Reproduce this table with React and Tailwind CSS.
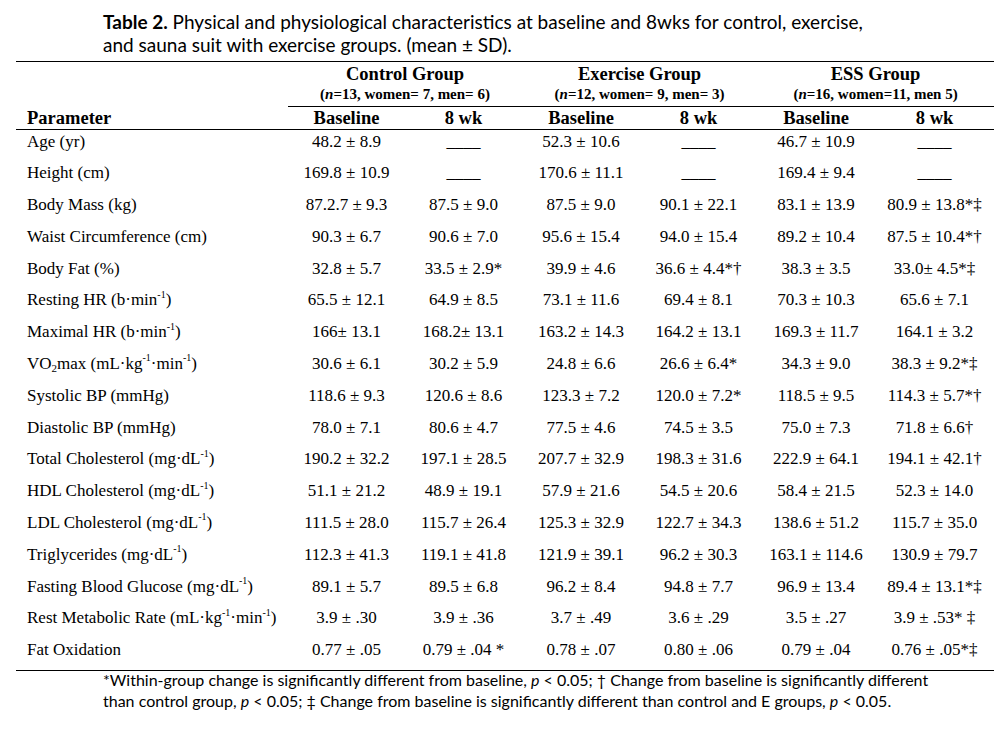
import React from "react";

const S = ({ children }) => (
  <sup className="text-[10px] relative -top-[1px] leading-none align-super">{children}</sup>
);

const rows = [
  ["Age (yr)", "48.2 ± 8.9", "____", "52.3 ± 10.6", "____", "46.7 ± 10.9", "____"],
  ["Height (cm)", "169.8 ± 10.9", "____", "170.6 ± 11.1", "____", "169.4 ± 9.4", "____"],
  ["Body Mass (kg)", "87.2.7 ± 9.3", "87.5 ± 9.0", "87.5 ± 9.0", "90.1 ± 22.1", "83.1 ± 13.9", "80.9 ± 13.8*‡"],
  ["Waist Circumference (cm)", "90.3 ± 6.7", "90.6 ± 7.0", "95.6 ± 15.4", "94.0 ± 15.4", "89.2 ± 10.4", "87.5 ± 10.4*†"],
  ["Body Fat (%)", "32.8 ± 5.7", "33.5 ± 2.9*", "39.9 ± 4.6", "36.6 ± 4.4*†", "38.3 ± 3.5", "33.0± 4.5*‡"],
  [<>Resting HR (b·min<S>-1</S>)</>, "65.5 ± 12.1", "64.9 ± 8.5", "73.1 ± 11.6", "69.4 ± 8.1", "70.3 ± 10.3", "65.6 ± 7.1"],
  [<>Maximal HR (b·min<S>-1</S>)</>, "166± 13.1", "168.2± 13.1", "163.2 ± 14.3", "164.2 ± 13.1", "169.3 ± 11.7", "164.1 ± 3.2"],
  [<>VO<sub className="text-[11px] leading-none">2</sub>max (mL·kg<S>-1</S>·min<S>-1</S>)</>, "30.6 ± 6.1", "30.2 ± 5.9", "24.8 ± 6.6", "26.6 ± 6.4*", "34.3 ± 9.0", "38.3 ± 9.2*‡"],
  ["Systolic BP (mmHg)", "118.6 ± 9.3", "120.6 ± 8.6", "123.3 ± 7.2", "120.0 ± 7.2*", "118.5 ± 9.5", "114.3 ± 5.7*†"],
  ["Diastolic BP (mmHg)", "78.0 ± 7.1", "80.6 ± 4.7", "77.5 ± 4.6", "74.5 ± 3.5", "75.0 ± 7.3", "71.8 ± 6.6†"],
  [<>Total Cholesterol (mg·dL<S>-1</S>)</>, "190.2 ± 32.2", "197.1 ± 28.5", "207.7 ± 32.9", "198.3 ± 31.6", "222.9 ± 64.1", "194.1 ± 42.1†"],
  [<>HDL Cholesterol (mg·dL<S>-1</S>)</>, "51.1 ± 21.2", "48.9 ± 19.1", "57.9 ± 21.6", "54.5 ± 20.6", "58.4 ± 21.5", "52.3 ± 14.0"],
  [<>LDL Cholesterol (mg·dL<S>-1</S>)</>, "111.5 ± 28.0", "115.7 ± 26.4", "125.3 ± 32.9", "122.7 ± 34.3", "138.6 ± 51.2", "115.7 ± 35.0"],
  [<>Triglycerides (mg·dL<S>-1</S>)</>, "112.3 ± 41.3", "119.1 ± 41.8", "121.9 ± 39.1", "96.2 ± 30.3", "163.1 ± 114.6", "130.9 ± 79.7"],
  [<>Fasting Blood Glucose (mg·dL<S>-1</S>)</>, "89.1 ± 5.7", "89.5 ± 6.8", "96.2 ± 8.4", "94.8 ± 7.7", "96.9 ± 13.4", "89.4 ± 13.1*‡"],
  [<>Rest Metabolic Rate (mL·kg<S>-1</S>·min<S>-1</S>)</>, "3.9 ± .30", "3.9 ± .36", "3.7 ± .49", "3.6 ± .29", "3.5 ± .27", "3.9 ± .53* ‡"],
  ["Fat Oxidation", "0.77 ± .05", "0.79 ± .04 *", "0.78 ± .07", "0.80 ± .06", "0.79 ± .04", "0.76 ± .05*‡"],
];

const groups = [
  ["Control Group", "13", "women= 7, men= 6)"],
  ["Exercise Group", "12", "women= 9, men= 3)"],
  ["ESS Group", "16", "women=11, men 5)"],
];

export default function App() {
  return (
    <div className="w-[1006px] h-[731px] bg-white text-black pl-[16px] pt-[10px]">
      <div className="pl-[87px] h-[51px] font-['Lato',sans-serif] text-[19px] leading-[23px]">
        <div>
          <span className="font-bold">Table 2.</span> Physical and physiological characteristics at baseline and 8wks for control, exercise,
        </div>
        <div>and sauna suit with exercise groups. (mean ± SD).</div>
      </div>
      <table className="w-[978px] table-fixed border-collapse font-['Liberation_Serif',serif]">
        <colgroup>
          <col className="w-[272px]" />
          <col className="w-[117px]" />
          <col className="w-[117px]" />
          <col className="w-[118px]" />
          <col className="w-[117px]" />
          <col className="w-[118px]" />
          <col className="w-[119px]" />
        </colgroup>
        <thead>
          <tr className="border-t border-black">
            <th className="h-[24px] p-0"></th>
            {groups.map((g) => (
              <th key={g[0]} colSpan={2} className="h-[24px] text-[18.5px] leading-[24px] font-bold text-center p-0">
                {g[0]}
              </th>
            ))}
          </tr>
          <tr>
            <th className="h-[20px] p-0"></th>
            {groups.map((g) => (
              <th key={g[0]} colSpan={2} className="h-[20px] text-[15px] leading-[17px] font-bold text-center p-0 pb-[3px] border-b border-black">
                (<i>n</i>={g[1]}, {g[2]}
              </th>
            ))}
          </tr>
          <tr className="border-b border-black">
            <th className="h-[22px] text-left pl-[11px] pr-0 py-0 text-[18.5px] leading-[22px] font-bold">Parameter</th>
            {["Baseline", "8 wk", "Baseline", "8 wk", "Baseline", "8 wk"].map((h, i) => (
              <th key={i} className="h-[22px] text-[18.5px] leading-[22px] font-bold text-center p-0">
                {h}
              </th>
            ))}
          </tr>
        </thead>
        <tbody className="text-[17px]">
          {rows.map((r, i) => (
            <tr key={i} className={i === rows.length - 1 ? "border-b border-black" : ""}>
              <td className="h-[31.8px] p-0 pl-[11px] align-top leading-[24px] whitespace-nowrap">{r[0]}</td>
              {r.slice(1).map((v, j) => (
                <td key={j} className="h-[31.8px] p-0 text-center align-top leading-[24px] whitespace-pre">
                  {v}
                </td>
              ))}
            </tr>
          ))}
        </tbody>
      </table>
      <div className="pl-[87px] -mt-[2px] font-['Lato',sans-serif] text-[16px] leading-[21px]">
        <div>
          *Within-group change is significantly different from baseline, <i>p</i> &lt; 0.05; † Change from baseline is significantly different
        </div>
        <div>
          than control group, <i>p</i> &lt; 0.05; ‡ Change from baseline is significantly different than control and E groups, <i>p</i> &lt; 0.05.
        </div>
      </div>
    </div>
  );
}
